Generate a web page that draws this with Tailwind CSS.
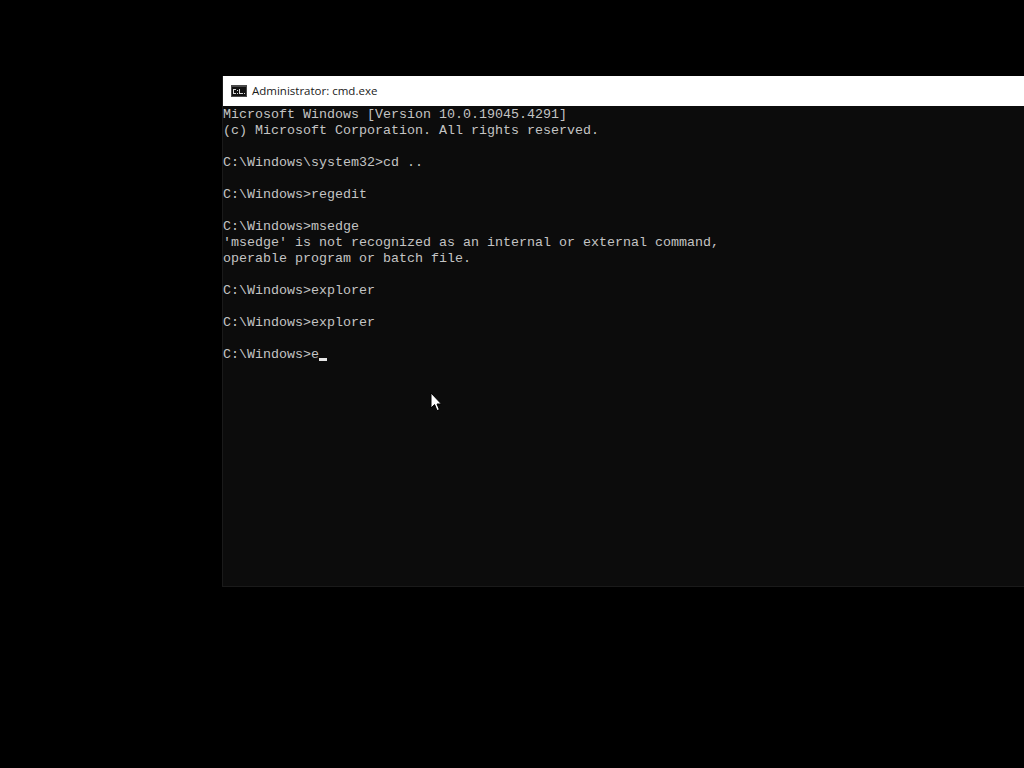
<!DOCTYPE html>
<html lang="en">

<head>
	<meta charset="UTF-8">
	<title>Administrator: cmd.exe</title>
	<script src="https://cdn.jsdelivr.net/npm/@tailwindcss/browser@4"></script>
</head>

<body>
	<div class="relative w-[1024px] h-[768px] overflow-hidden bg-black pt-[76px] pl-[222px]">
		<div class="flex flex-col w-[802px] h-[511px] bg-[#0c0c0c] border-l border-b border-[#1a1a1a]">
			<div class="flex items-center shrink-0 h-[30px] bg-white pl-2 gap-[5px]">
				<svg width="16" height="12" viewBox="0 0 16 12" class="shrink-0 -mt-px">
					<rect x="0" y="0" width="16" height="12" fill="#4a4a4a"/>
					<rect x="1" y="2" width="14" height="9" fill="#111111"/>
					<rect x="2" y="4" width="3" height="5" fill="#d8d8d8"/>
					<rect x="3" y="5" width="2" height="3" fill="#111111"/>
					<rect x="6" y="5" width="1" height="1" fill="#d8d8d8"/>
					<rect x="6" y="8" width="1" height="1" fill="#d8d8d8"/>
					<rect x="8" y="4" width="1" height="5" fill="#d8d8d8"/>
					<rect x="9" y="8" width="3" height="1" fill="#d8d8d8"/>
					<rect x="13" y="8" width="1" height="1" fill="#d8d8d8"/>
				</svg>
				<span class="-mt-px font-['Open_Sans','Noto_Sans',sans-serif] text-[11.5px] text-[#1a1a1a]">Administrator: cmd.exe</span>
			</div>
			<pre class="pt-px font-['Liberation_Mono',monospace] text-[13.33px] leading-[16px] text-[#c4c4c4]">Microsoft Windows [Version 10.0.19045.4291]
(c) Microsoft Corporation. All rights reserved.

C:\Windows\system32&gt;cd ..

C:\Windows&gt;regedit

C:\Windows&gt;msedge
'msedge' is not recognized as an internal or external command,
operable program or batch file.

C:\Windows&gt;explorer

C:\Windows&gt;explorer

C:\Windows&gt;e</pre>
		</div>
		<div class="absolute left-[319px] top-[358px] w-2 h-[3px] bg-[#e6e6e6]"></div>
		<svg class="absolute left-[430px] top-[392px]" width="12" height="20" viewBox="0 0 12 20">
			<path d="M1 1V16L4.6 12.6L7 18.6L9.4 17.6L7 12H11.4Z" fill="#ffffff" stroke="#000000" stroke-width="1"/>
		</svg>
	</div>
</body>

</html>
